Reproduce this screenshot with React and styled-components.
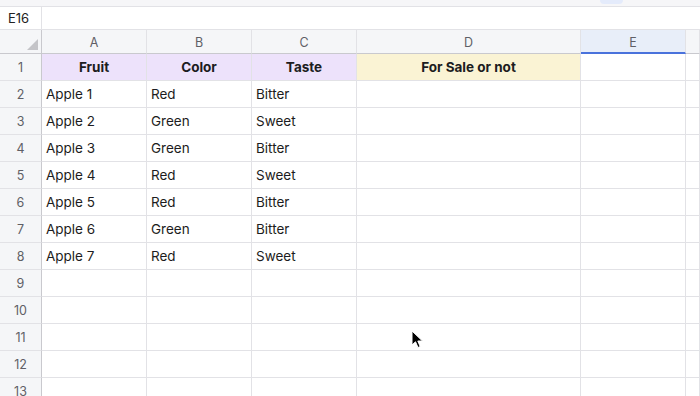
import React from 'react';
import styled, { createGlobalStyle } from 'styled-components';

const GlobalStyle = createGlobalStyle`
  html, body {
    margin: 0;
    padding: 0;
    background: #fff;
    overflow: hidden;
  }
  body {
    font-family: Inter, "Noto Sans", "Liberation Sans", sans-serif;
    color: #1f1f23;
  }
`;

const Page = styled.div`
  position: relative;
  width: 700px;
  height: 396px;
  overflow: hidden;
`;

const TopStrip = styled.div`
  height: 6px;
  background: #f6f6f8;
  border-bottom: 1px solid #e2e2e6;
  display: flex;
  justify-content: flex-end;
  padding-right: 77px;
`;

const StripPill = styled.div`
  width: 23px;
  height: 4px;
  background: #e4ebfb;
  border-radius: 0 0 4px 4px;
`;

const FormulaBar = styled.div`
  height: 22px;
  display: flex;
  border-bottom: 1px solid #e2e2e6;
`;

const NameBox = styled.div`
  width: 42px;
  box-sizing: border-box;
  border-right: 1px solid #e2e2e6;
  font-size: 13px;
  display: flex;
  align-items: center;
  padding-left: 8px;
  color: #222;
`;

const FormulaInput = styled.div`
  flex: 1;
`;

const Grid = styled.div`
  display: grid;
  grid-template-columns: 42px 105px 105px 105px 224px 105px 1fr;
  grid-template-rows: 24px repeat(13, 27px);
`;

const Corner = styled.div`
  background: #f5f6f8;
  border-right: 1px solid #c9c9ce;
  border-bottom: 1px solid #c9c9ce;
  position: relative;
  box-sizing: border-box;

  &::after {
    content: '';
    position: absolute;
    right: 3px;
    bottom: 3px;
    width: 0;
    height: 0;
    border-left: 11px solid transparent;
    border-bottom: 11px solid #c4c4c8;
  }
`;

const ColHeader = styled.div`
  box-sizing: border-box;
  background: ${(p) => (p.$active ? '#e8eef9' : '#f5f6f8')};
  border-right: 1px solid #e2e2e6;
  border-bottom: ${(p) => (p.$active ? '2px solid #4a72dc' : '1px solid #c9c9ce')};
  font-size: 12.5px;
  color: #5f5f66;
  display: flex;
  align-items: center;
  justify-content: center;
  padding-top: ${(p) => (p.$active ? '2px' : '1px')};
`;

const RowHeader = styled.div`
  box-sizing: border-box;
  background: #f5f6f8;
  border-right: 1px solid #c9c9ce;
  border-bottom: 1px solid #e2e2e6;
  font-size: 12.5px;
  color: #5f5f66;
  display: flex;
  align-items: center;
  justify-content: center;
`;

const fills = {
  lilac: '#ede2fb',
  cream: '#faf3d4',
  none: '#fff',
};

const Cell = styled.div`
  box-sizing: border-box;
  background: ${(p) => fills[p.$fill || 'none']};
  border-right: 1px solid #e2e2e6;
  border-bottom: 1px solid #e2e2e6;
  font-size: 13.5px;
  font-weight: ${(p) => (p.$head ? 700 : 400)};
  color: #1c1c20;
  display: flex;
  align-items: center;
  justify-content: ${(p) => (p.$head ? 'center' : 'flex-start')};
  padding-left: ${(p) => (p.$head ? '0' : '4px')};
  white-space: nowrap;
  overflow: hidden;
`;

const Pointer = styled.svg`
  position: absolute;
  left: 411px;
  top: 330px;
`;

const columns = ['A', 'B', 'C', 'D', 'E', ''];

const rows = [
  ['Apple 1', 'Red', 'Bitter'],
  ['Apple 2', 'Green', 'Sweet'],
  ['Apple 3', 'Green', 'Bitter'],
  ['Apple 4', 'Red', 'Sweet'],
  ['Apple 5', 'Red', 'Bitter'],
  ['Apple 6', 'Green', 'Bitter'],
  ['Apple 7', 'Red', 'Sweet'],
];

export default function App() {
  const body = [];
  for (let r = 2; r <= 13; r++) {
    const data = rows[r - 2] || [];
    body.push(<RowHeader key={`h${r}`}>{r}</RowHeader>);
    columns.forEach((c, i) => {
      body.push(<Cell key={`${r}-${i}`}>{data[i] || ''}</Cell>);
    });
  }

  return (
    <Page>
      <GlobalStyle />
      <TopStrip>
        <StripPill />
      </TopStrip>
      <FormulaBar>
        <NameBox>E16</NameBox>
        <FormulaInput />
      </FormulaBar>
      <Grid>
        <Corner />
        {columns.map((c, i) => (
          <ColHeader key={i} $active={c === 'E'}>
            {c}
          </ColHeader>
        ))}
        <RowHeader>1</RowHeader>
        <Cell $head $fill="lilac">Fruit</Cell>
        <Cell $head $fill="lilac">Color</Cell>
        <Cell $head $fill="lilac">Taste</Cell>
        <Cell $head $fill="cream">For Sale or not</Cell>
        <Cell />
        <Cell />
        {body}
      </Grid>
      <Pointer width="13" height="19" viewBox="0 0 13 19">
        <path
          d="M1 1 L1 15 L4.5 11.8 L7 17.5 L9.2 16.5 L6.8 11 L11.5 11 Z"
          fill="#000"
          stroke="#fff"
          strokeWidth="1"
          strokeLinejoin="round"
        />
      </Pointer>
    </Page>
  );
}
